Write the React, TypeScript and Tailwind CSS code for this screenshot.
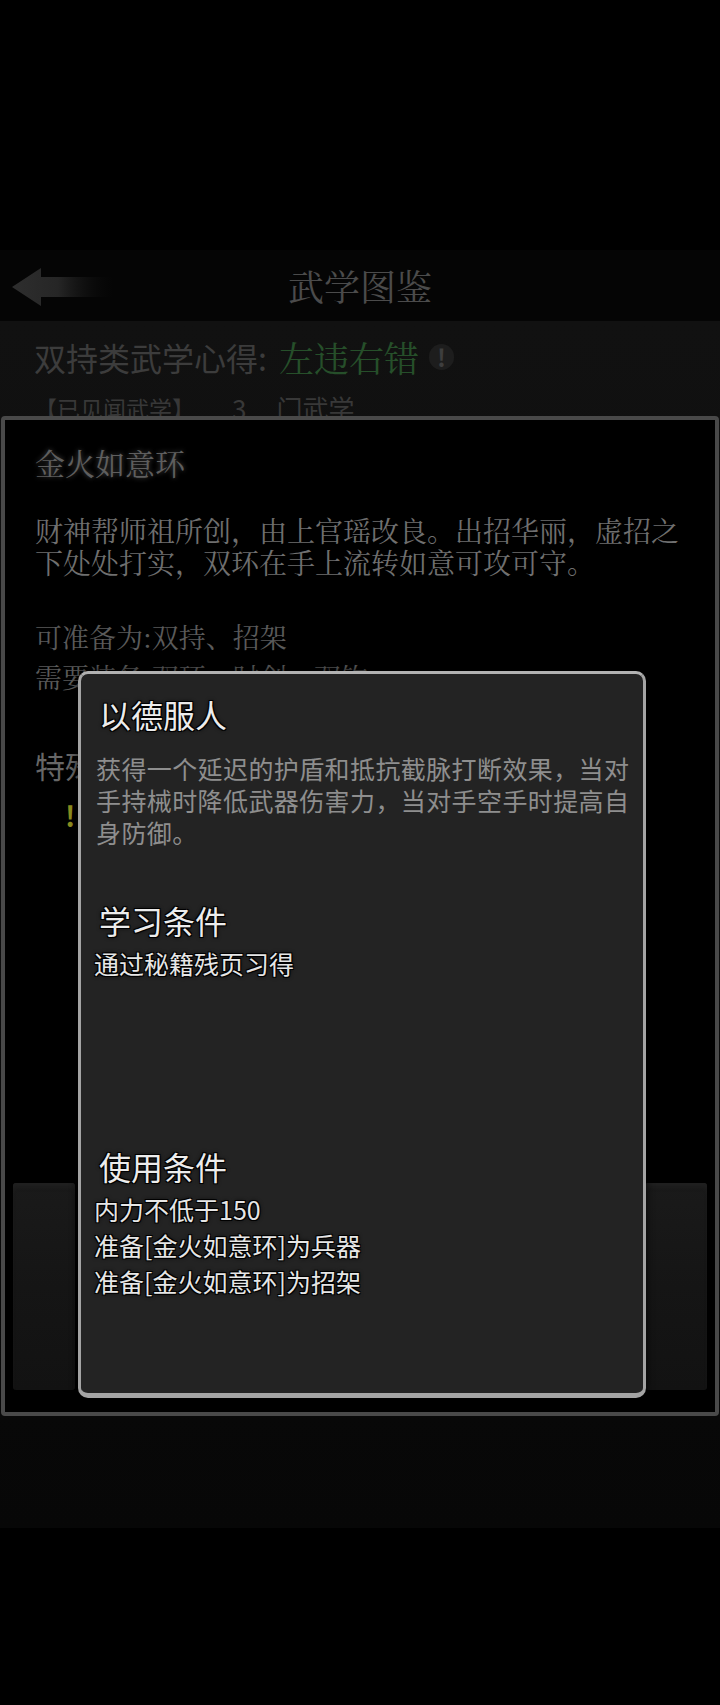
import { ReactNode } from "react"

const kai = "font-['Noto_Serif_CJK_SC','AR_PL_UKai_CN','Noto_Sans_CJK_SC',serif]"
const outline =
  "[text-shadow:1px_1px_0_#000,-1px_-1px_0_#000,1px_-1px_0_#000,-1px_1px_0_#000,0_0_4px_#000]"

const BackArrow = () => (
  <svg width="104" height="46" viewBox="0 0 104 46">
    <defs>
      <linearGradient id="arrowFade" x1="0" x2="1" y1="0" y2="0">
        <stop offset="0" stopColor="#2e2e2e" />
        <stop offset="0.45" stopColor="#262626" />
        <stop offset="1" stopColor="#0a0a0a" stopOpacity="0" />
      </linearGradient>
    </defs>
    <path d="M2 23 L31 4 L31 13 L104 13 L104 33 L31 33 L31 42 Z" fill="url(#arrowFade)" />
  </svg>
)

const SectionTitle = ({ children }: { children: ReactNode }) => (
  <div className={`ml-[5px] text-[32px] leading-[40px] text-[#ececec] ${outline}`}>{children}</div>
)

const Line = ({ children }: { children: ReactNode }) => (
  <div className={`text-[25px] leading-[36px] text-[#e6e6e6] ${outline}`}>{children}</div>
)

// slot block peeking out at the bottom of the detail panel
const Slot = () => (
  <div className="h-[207px] w-[62px] rounded-[3px] bg-gradient-to-b from-[#1a1a1a] via-[#151515] to-[#121212] shadow-[inset_0_6px_4px_-2px_#202020]" />
)

export default function App() {
  return (
    <div className="relative h-[1705px] w-[720px] overflow-hidden bg-black pt-[250px] font-['Noto_Sans_CJK_SC',sans-serif]">
      {/* top bar */}
      <header className="grid h-[71px] grid-cols-[1fr_auto_1fr] items-center bg-[#050505]">
        <div className="pl-[10px] pt-[3px]">
          <BackArrow />
        </div>
        <h1 className={`text-[36px] leading-none text-[#4b4b4b] ${kai}`}>武学图鉴</h1>
        <div />
      </header>

      {/* list page behind the popups */}
      <section className="h-[1207px] bg-gradient-to-b from-[#111111] via-[#0d0d0d] to-[#070707] px-[34px] pt-[16px]">
        <div className="flex items-center text-[32px] leading-[40px]">
          <span className="text-[#3c3c3c]">双持类武学心得:</span>
          <span className={`ml-[12px] text-[35px] text-[#264f2a] ${kai}`}>左违右错</span>
          <span className="ml-[10px] flex h-[26px] w-[25px] items-center justify-center rounded-full bg-[#1d1d1d] text-[24px] font-bold text-[#3e3e3e]">
            !
          </span>
        </div>
        <div className="mt-[14px] flex items-center text-[23px] leading-[34px] text-[#383838]">
          <span>【已见闻武学】</span>
          <span className="ml-[37px] text-[26px]">3</span>
          <span className="ml-[30px] text-[26px]">门武学</span>
        </div>
      </section>

      {/* martial art detail panel */}
      <div className="absolute left-[1px] right-[1px] top-[416px] flex h-[1000px] flex-col rounded-[4px] border-4 border-[#494949] bg-black pl-[30px] pr-[20px]">
        <h2
          className={`mt-[24px] text-[30px] leading-[36px] text-[#5e5e5e] [text-shadow:0_0_5px_rgba(200,200,200,0.35)] ${kai}`}
        >
          金火如意环
        </h2>
        <p className={`mt-[34px] text-[28px] leading-[32px] text-[#6f6f6f] ${kai}`}>
          财神帮师祖所创，由上官瑶改良。出招华丽，虚招之下处处打实，双环在手上流转如意可攻可守。
        </p>
        <div className={`mt-[39px] text-[27px] leading-[40px] text-[#5a5a5a] ${kai}`}>
          <div>可准备为:双持、招架</div>
          <div>需要装备:双环、时剑、双钩</div>
        </div>
        <div className="mt-[48px] text-[30px] leading-[40px] text-[#676767]">特殊效果</div>
        <div className="mt-[10px] pl-[30px] text-[28px] font-bold leading-[40px] text-[#8d8d1f]">!</div>

        <div className="-ml-[22px] -mr-[12px] mt-auto mb-[22px] flex justify-between">
          <Slot />
          <Slot />
        </div>
      </div>

      {/* skill popup */}
      <div className="absolute left-[78px] top-[671px] h-[727px] w-[568px] rounded-[10px] border-[3px] border-b-[5px] border-[#a4a4a4] border-t-[#b2b2b2] bg-[#232323] pl-[13px] pt-[20px] shadow-[0_0_8px_rgba(0,0,0,0.8)]">
        <SectionTitle>以德服人</SectionTitle>
        <p className="ml-[2px] mt-[18px] w-[540px] text-[25px] leading-[32px] tracking-[0.4px] text-[#8e8e8e]">
          获得一个延迟的护盾和抵抗截脉打断效果，当对手持械时降低武器伤害力，当对手空手时提高自身防御。
        </p>

        <div className="mt-[52px]">
          <SectionTitle>学习条件</SectionTitle>
        </div>
        <div className="mt-[5px]">
          <Line>通过秘籍残页习得</Line>
        </div>

        <div className="mt-[165px]">
          <SectionTitle>使用条件</SectionTitle>
        </div>
        <div className="mt-[5px]">
          <Line>内力不低于150</Line>
          <Line>准备[金火如意环]为兵器</Line>
          <Line>准备[金火如意环]为招架</Line>
        </div>
      </div>
    </div>
  )
}
